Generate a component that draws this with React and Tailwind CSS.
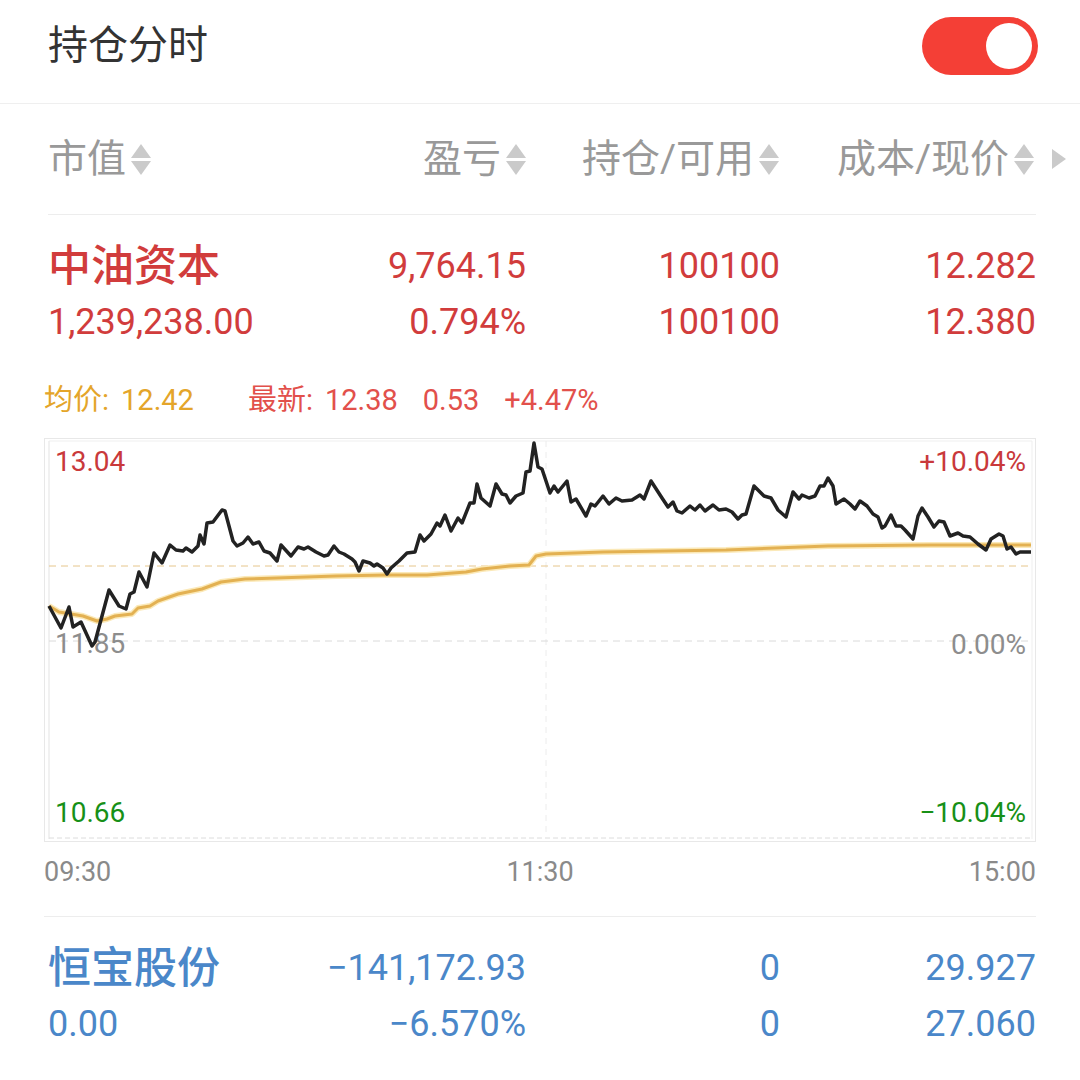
import React from 'react';

const FONT = { fontFamily: "Roboto, 'Noto Sans CJK SC', 'Noto Sans', sans-serif" };

// price line, in page coordinates (chart box spans x 45..1035, y 440..842)
const PRICE = [
  [49, 607], [61, 629], [69, 608], [73, 628], [81, 623], [92, 647], [95, 643], [109, 591],
  [119, 607], [126, 610], [130, 595], [134, 593], [139, 573], [147, 588], [154, 554], [162, 564],
  [170, 546], [176, 551], [183, 552], [186, 549], [192, 553], [198, 547], [200, 536], [204, 545],
  [207, 524], [213, 523], [222, 511], [225, 512], [233, 542], [237, 547], [243, 544], [248, 538],
  [253, 545], [259, 543], [264, 552], [270, 554], [277, 562], [281, 546], [291, 557], [298, 548],
  [304, 550], [308, 548], [316, 553], [324, 557], [328, 556], [334, 547], [339, 553], [344, 555],
  [352, 560], [355, 563], [359, 572], [363, 562], [370, 564], [374, 567], [377, 565], [383, 569],
  [387, 575], [391, 569], [399, 562], [407, 554], [415, 553], [420, 536], [424, 542], [431, 535],
  [437, 524], [440, 527], [445, 516], [451, 532], [458, 519], [462, 524], [470, 504], [474, 504],
  [477, 485], [481, 499], [490, 507], [496, 485], [502, 495], [506, 496], [510, 504], [516, 497],
  [523, 494], [526, 473], [530, 472], [534, 444], [538, 468], [542, 470], [550, 494], [554, 487],
  [558, 493], [567, 482], [571, 503], [576, 500], [586, 517], [591, 505], [595, 507], [603, 497],
  [609, 505], [616, 499], [622, 502], [632, 501], [640, 496], [644, 500], [651, 482], [662, 499],
  [668, 508], [673, 503], [677, 512], [682, 514], [690, 507], [695, 511], [700, 506], [705, 512],
  [713, 506], [719, 511], [726, 510], [732, 513], [738, 520], [742, 516], [746, 515], [754, 487],
  [764, 497], [771, 499], [778, 511], [786, 518], [793, 493], [799, 500], [802, 496], [809, 499],
  [815, 497], [820, 487], [824, 487], [828, 479], [833, 487], [836, 505], [844, 500], [850, 505],
  [855, 510], [860, 502], [867, 507], [873, 515], [878, 518], [882, 529], [885, 527], [891, 516],
  [896, 527], [901, 527], [905, 531], [913, 540], [918, 517], [922, 509], [928, 518], [934, 528],
  [939, 522], [944, 523], [950, 537], [958, 534], [963, 537], [970, 538], [978, 545], [986, 551],
  [991, 540], [999, 535], [1003, 537], [1007, 550], [1011, 548], [1016, 555], [1020, 553], [1031, 553],
];

// average price line
const AVG = [
  [49, 607], [59, 613], [71, 615], [83, 617], [97, 622], [107, 620], [115, 617], [132, 615],
  [138, 609], [150, 607], [158, 602], [178, 595], [202, 590], [221, 583], [245, 580], [277, 579],
  [336, 577], [387, 576], [427, 576], [466, 573], [482, 570], [510, 567], [529, 566], [536, 557],
  [546, 555], [603, 553], [726, 551], [828, 547], [930, 546], [1031, 546],
];

const toPath = (pts) => pts.map(([x, y], i) => `${i ? 'L' : 'M'}${x} ${y}`).join(' ');

function SortArrows() {
  return (
    <span className="ml-[5px] shrink-0 flex flex-col gap-[3px]">
      <span className="block w-0 h-0 border-x-[10px] border-x-transparent border-b-[14px] border-b-[#cacaca]" />
      <span className="block w-0 h-0 border-x-[10px] border-x-transparent border-t-[14px] border-t-[#cacaca]" />
    </span>
  );
}

function Toggle() {
  return (
    <div className="w-[116px] h-[58px] rounded-full bg-[#f43f36] flex items-center justify-end pr-[6px]">
      <div className="w-[46px] h-[46px] rounded-full bg-white" />
    </div>
  );
}

function StockRow({ color, name, lines }) {
  return (
    <div className={`pl-[48px] pr-[44px] ${color}`}>
      {lines.map((cells, i) => (
        <div key={i} className="flex items-center h-[56px] text-[36px]">
          <div className={`w-[240px] shrink-0 whitespace-nowrap ${i === 0 ? 'text-[43px] font-medium' : ''}`}>
            {i === 0 ? name : cells[0]}
          </div>
          <div className="w-[238px] shrink-0 text-right whitespace-nowrap">{cells[1]}</div>
          <div className="w-[254px] shrink-0 text-right">{cells[2]}</div>
          <div className="w-[256px] shrink-0 text-right">{cells[3]}</div>
        </div>
      ))}
    </div>
  );
}

function Chart() {
  return (
    <div className="ml-[44px] w-[992px] h-[404px] border border-[#e8e8e8] bg-white">
      <svg width="990" height="402" viewBox="45 440 990 402" style={FONT}>
        <line x1="49" y1="442" x2="1032" y2="442" stroke="#efefef" strokeWidth="1" />
        <line x1="49" y1="442" x2="49" y2="840" stroke="#ececec" strokeWidth="1.5" />
        <line x1="1032" y1="442" x2="1032" y2="840" stroke="#efefef" strokeWidth="1" />
        <line x1="49" y1="839" x2="1032" y2="839" stroke="#dcdcdc" strokeWidth="1" strokeDasharray="5 3" />
        <line x1="546" y1="442" x2="546" y2="839" stroke="#ececec" strokeWidth="1" strokeDasharray="6 5" />
        <line x1="49" y1="642" x2="1032" y2="642" stroke="#dadada" strokeWidth="1" strokeDasharray="7 5" />
        <line x1="49" y1="567" x2="1032" y2="567" stroke="#e6c68c" strokeWidth="1" strokeDasharray="7 5" />

        <g fontSize="28">
          <text x="55" y="472" fill="#c9393b">13.04</text>
          <text x="1026" y="472" fill="#c9393b" textAnchor="end">+10.04%</text>
          <text x="55" y="654" fill="#8d8d8d">11.85</text>
          <text x="1026" y="655" fill="#8d8d8d" textAnchor="end">0.00%</text>
          <text x="55" y="823" fill="#179017">10.66</text>
          <text x="1026" y="823" fill="#179017" textAnchor="end">−10.04%</text>
        </g>

        <path d={toPath(AVG)} fill="none" stroke="#fbe9b8" strokeWidth="6" strokeLinejoin="round" />
        <path d={toPath(AVG)} fill="none" stroke="#e3b152" strokeWidth="3" strokeLinejoin="round" />
        <path d={toPath(PRICE)} fill="none" stroke="#222222" strokeWidth="3.5" strokeLinejoin="round" />
      </svg>
    </div>
  );
}

export default function App() {
  return (
    <div className="w-[1080px] h-[1080px] bg-white overflow-hidden" style={FONT}>
      {/* header */}
      <div className="h-[104px] pl-[48px] pr-[42px] pb-[12px] flex items-center justify-between border-b border-[#efefef]">
        <span className="text-[40px] text-[#333333]">持仓分时</span>
        <Toggle />
      </div>

      {/* column headers */}
      <div className="ml-[48px] w-[988px] h-[111px] flex items-center border-b border-[#ededed] text-[39px] text-[#999999]">
        <div className="w-[240px] shrink-0 flex items-center">市值<SortArrows /></div>
        <div className="w-[238px] shrink-0 flex items-center justify-end">盈亏<SortArrows /></div>
        <div className="w-[254px] shrink-0 flex items-center justify-end pr-[1px]">持仓/可用<SortArrows /></div>
        <div className="w-[256px] shrink-0 flex items-center justify-end pr-[2px]">成本/现价<SortArrows /></div>
        <span className="ml-[16px] shrink-0 block w-0 h-0 border-y-[10px] border-y-transparent border-l-[14px] border-l-[#cacaca]" />
      </div>

      <div className="pt-[23px]">
        <StockRow
          color="text-[#d13c3c]"
          name="中油资本"
          lines={[
            ['', '9,764.15', '100100', '12.282'],
            ['1,239,238.00', '0.794%', '100100', '12.380'],
          ]}
        />
      </div>

      {/* legend */}
      <div className="mt-[31px] h-[40px] pl-[44px] flex items-center text-[29px]">
        <span className="text-[#e4a52a]">均价:</span>
        <span className="ml-[12px] text-[#e4a52a]">12.42</span>
        <span className="ml-[54px] text-[#e2504b]">最新:</span>
        <span className="ml-[12px] text-[#e2504b]">12.38</span>
        <span className="ml-[25px] text-[#e2504b]">0.53</span>
        <span className="ml-[25px] text-[#e2504b]">+4.47%</span>
      </div>

      <div className="mt-[17px]">
        <Chart />
      </div>

      {/* time axis */}
      <div className="mt-[15px] h-[30px] ml-[44px] w-[992px] flex items-center justify-between text-[27px] text-[#8a8a8a]">
        <span>09:30</span>
        <span>11:30</span>
        <span>15:00</span>
      </div>

      <div className="mt-[29px] ml-[44px] w-[992px] border-b border-[#ededed]" />

      <div className="pt-[23px]">
        <StockRow
          color="text-[#4a87c9]"
          name="恒宝股份"
          lines={[
            ['', '−141,172.93', '0', '29.927'],
            ['0.00', '−6.570%', '0', '27.060'],
          ]}
        />
      </div>
    </div>
  );
}
